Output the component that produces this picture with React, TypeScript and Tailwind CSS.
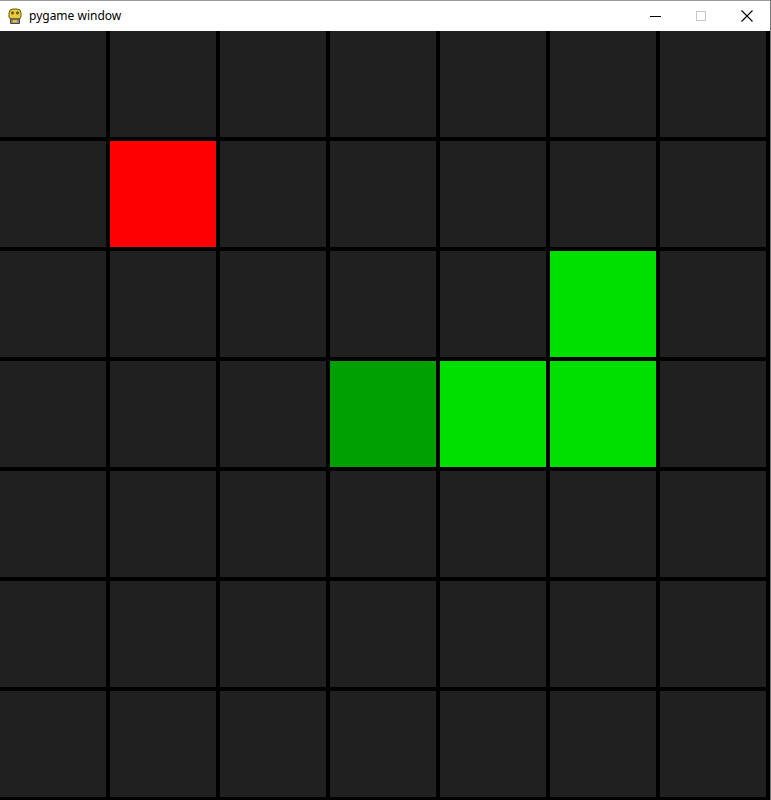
const ROWS = 7;
const COLS = 7;

// board state: r = food, h = head, b = body
const cells: Record<string, 'r' | 'h' | 'b'> = {
  '1-1': 'r',
  '3-3': 'h',
  '3-4': 'b',
  '3-5': 'b',
  '2-5': 'b',
};

function PygameIcon() {
  return (
    <svg width="16" height="18" viewBox="0 0 16 18">
      <path d="M2 6 Q2 2 6 2 L10 2 Q14 2 14 6 L14 10 Q14 12 11 12 L5 12 Q2 12 2 10 Z" fill="#e8c93a" stroke="#6b5a1a" strokeWidth="1" />
      <circle cx="5.5" cy="6" r="1.4" fill="#5a4a10" />
      <circle cx="10.5" cy="6" r="1.4" fill="#5a4a10" />
      <path d="M3.5 12 L12.5 12 L12.5 16.5 L3.5 16.5 Z" fill="#8d8a80" stroke="#4a4842" strokeWidth="1" />
      <rect x="6" y="13" width="4" height="2.5" fill="#d8c24a" />
    </svg>
  );
}

function TitleBar() {
  return (
    <div className="h-[31px] border-t border-[#9a9a9a] bg-white flex items-center font-['Noto_Sans',sans-serif] text-[12px] text-black">
      <div className="pl-[7px] pr-[6px] flex items-center">
        <PygameIcon />
      </div>
      <span className="leading-none">pygame window</span>
      <div className="ml-auto flex items-center h-full">
        <div className="w-[46px] h-full flex items-center justify-center">
          <div className="w-[11px] h-px bg-black" />
        </div>
        <div className="w-[46px] h-full flex items-center justify-center">
          <div className="w-[10px] h-[10px] border border-[#c8c8c8]" />
        </div>
        <div className="w-[46px] h-full flex items-center justify-center">
          <svg width="12" height="12" viewBox="0 0 12 12">
            <path d="M0.5 0.5 L11.5 11.5 M11.5 0.5 L0.5 11.5" stroke="#000" strokeWidth="1.1" />
          </svg>
        </div>
      </div>
    </div>
  );
}

export default function App() {
  return (
    <div className="w-[771px] h-[800px] overflow-hidden bg-black border-r border-[#7a7a7a]">
      <TitleBar />
      <div className="grid grid-cols-[repeat(7,106px)] auto-rows-[106px] gap-1 w-[770px] bg-black">
        {Array.from({ length: ROWS * COLS }, (_, i) => {
          const r = Math.floor(i / COLS);
          const c = i % COLS;
          const kind = cells[`${r}-${c}`];
          const color =
            kind === 'r'
              ? 'bg-[#ff0000]'
              : kind === 'h'
                ? 'bg-[#00a000]'
                : kind === 'b'
                  ? 'bg-[#00e000]'
                  : 'bg-[#202020]';
          return <div key={i} className={color} />;
        })}
      </div>
    </div>
  );
}
